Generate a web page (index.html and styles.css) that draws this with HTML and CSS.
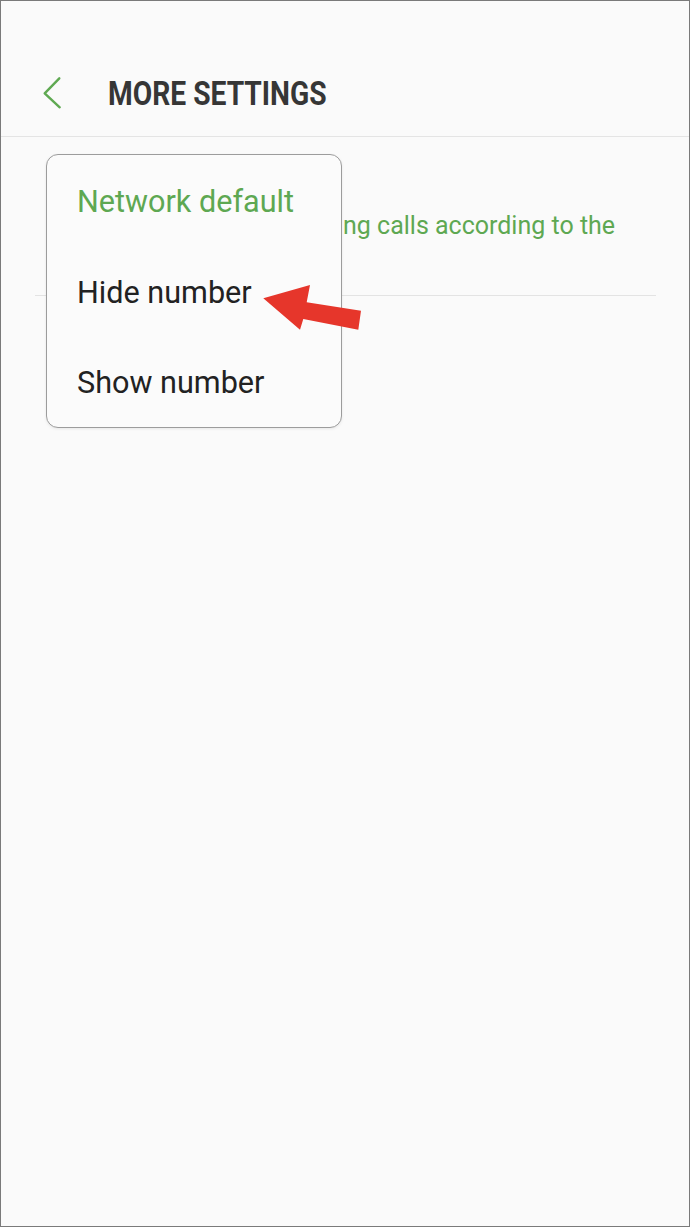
FILE: index.html
```html
<!DOCTYPE html>
<html lang="en">
<head>
<meta charset="utf-8">
<title>More settings</title>
<link rel="stylesheet" href="styles.css">
</head>
<body>
<div class="frame">
  <header class="appbar">
    <svg class="back" width="20" height="34" viewBox="0 0 20 34" aria-hidden="true">
      <polyline points="17.3,2.3 2.7,17.3 17.7,31.3" fill="none" stroke="#5fa952" stroke-width="2.4" stroke-linecap="round" stroke-linejoin="round"/>
    </svg>
    <h1 class="title"><span class="title-text">MORE SETTINGS</span></h1>
  </header>
  <main class="content">
    <div class="item">
      <div class="item-sub">ng calls according to the</div>
    </div>
    <div class="divider"></div>

    <ul class="menu">
      <li class="menu-item selected">Network default</li>
      <li class="menu-item">Hide number</li>
      <li class="menu-item">Show number</li>
    </ul>

    <svg class="arrow" width="115" height="60" viewBox="0 0 115 60" aria-hidden="true">
      <polygon points="8.3,21.3 55,8 51.7,25.3 106,33.7 103.3,52.7 48.3,42 45,52.7" fill="#e6362b"/>
    </svg>
  </main>
</div>
</body>
</html>
```

FILE: styles.css
```css
html, body {
  margin: 0;
  padding: 0;
  background: #fafafa;
}

.frame {
  position: relative;
  width: 690px;
  height: 1227px;
  box-sizing: border-box;
  border: 1px solid #7a7a7a;
  background: #fafafa;
  font-family: Roboto, "Noto Sans", sans-serif;
  overflow: hidden;
}

.appbar {
  height: 136px;
  box-sizing: border-box;
  padding: 48px 0 0 41px;
  display: flex;
  align-items: center;
  border-bottom: 1px solid #e4e4e4;
}

.back {
  display: block;
  flex: none;
}

.title {
  margin: 0 0 0 46px;
  font-size: 34px;
  font-weight: 700;
  color: #363636;
  line-height: 40px;
  white-space: nowrap;
}

.title-text {
  display: inline-block;
  transform: scaleX(0.83);
  transform-origin: left center;
}

.content {
  position: relative;
}

.item {
  padding: 72px 34px 52px 342px;
}

.item-sub {
  font-size: 25px;
  line-height: 34px;
  color: #5ea852;
  white-space: nowrap;
}

.divider {
  height: 1px;
  background: #e3e3e3;
  margin: 0 33px 0 34px;
}

.menu {
  position: absolute;
  left: 45px;
  top: 17px;
  width: 296px;
  margin: 0;
  padding: 0;
  list-style: none;
  box-sizing: border-box;
  border: 1px solid #9c9c9c;
  border-radius: 12px;
  background: #fbfbfb;
  box-shadow: 0 1px 3px rgba(0, 0, 0, 0.08);
}

.menu-item {
  height: 90.7px;
  line-height: 93px;
  padding-left: 30px;
  font-size: 30.6px;
  color: #222;
  white-space: nowrap;
}

.menu-item.selected {
  color: #5ea852;
}

.arrow {
  position: absolute;
  left: 254px;
  top: 140px;
}
```
